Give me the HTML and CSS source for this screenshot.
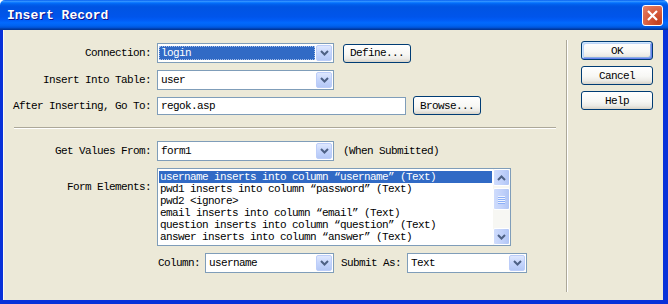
FILE: index.html
```html
<!DOCTYPE html>
<html lang="en">
<head>
    <meta charset="UTF-8">
    <title>Insert Record</title>
    <link rel="stylesheet" href="styles.css">
</head>
<body>
    <div class="window">
        <div class="titlebar">
            <span class="title">Insert Record</span>
            <span class="close">
                <svg width="13" height="13" viewBox="0 0 13 13"><path d="M2 2l9 9M11 2l-9 9" stroke="#fff" stroke-width="2.2" fill="none"/></svg>
            </span>
        </div>
        <div class="frame">
            <div class="main">
                <div class="row">
                    <span class="lbl">Connection:</span>
                    <div class="combo w-wide">
                        <span class="value selected">login</span>
                        <span class="arrow"><svg width="9" height="6" viewBox="0 0 9 6"><path d="M1 1l3.5 3.5L8 1" stroke="#4d6185" stroke-width="2" fill="none"/></svg></span>
                    </div>
                    <button class="btn define">Define...</button>
                </div>
                <div class="row row-table">
                    <span class="lbl">Insert Into Table:</span>
                    <div class="combo w-wide">
                        <span class="value">user</span>
                        <span class="arrow"><svg width="9" height="6" viewBox="0 0 9 6"><path d="M1 1l3.5 3.5L8 1" stroke="#4d6185" stroke-width="2" fill="none"/></svg></span>
                    </div>
                </div>
                <div class="row row-goto">
                    <span class="lbl">After Inserting, Go To:</span>
                    <div class="textbox">regok.asp</div>
                    <button class="btn browse">Browse...</button>
                </div>
                <div class="separator"></div>
                <div class="row row-values">
                    <span class="lbl">Get Values From:</span>
                    <div class="combo w-wide">
                        <span class="value">form1</span>
                        <span class="arrow"><svg width="9" height="6" viewBox="0 0 9 6"><path d="M1 1l3.5 3.5L8 1" stroke="#4d6185" stroke-width="2" fill="none"/></svg></span>
                    </div>
                    <span class="note">(When Submitted)</span>
                </div>
                <div class="row row-elements">
                    <span class="lbl lbl-top">Form Elements:</span>
                    <div class="listbox">
                        <ul class="items">
                            <li class="active">username inserts into column “username” (Text)</li>
                            <li>pwd1 inserts into column “password” (Text)</li>
                            <li>pwd2 &lt;ignore&gt;</li>
                            <li>email inserts into column “email” (Text)</li>
                            <li>question inserts into column “question” (Text)</li>
                            <li>answer inserts into column “answer” (Text)</li>
                        </ul>
                        <div class="scrollbar">
                            <span class="sb-btn"><svg width="9" height="6" viewBox="0 0 9 6"><path d="M1 5l3.5-3.5L8 5" stroke="#4d6185" stroke-width="2" fill="none"/></svg></span>
                            <span class="sb-thumb"><i></i><i></i><i></i><i></i></span>
                            <span class="sb-track"></span>
                            <span class="sb-btn"><svg width="9" height="6" viewBox="0 0 9 6"><path d="M1 1l3.5 3.5L8 1" stroke="#4d6185" stroke-width="2" fill="none"/></svg></span>
                        </div>
                    </div>
                </div>
                <div class="row row-column">
                    <span class="inline-lbl">Column:</span>
                    <div class="combo w-column">
                        <span class="value">username</span>
                        <span class="arrow"><svg width="9" height="6" viewBox="0 0 9 6"><path d="M1 1l3.5 3.5L8 1" stroke="#4d6185" stroke-width="2" fill="none"/></svg></span>
                    </div>
                    <span class="inline-lbl submit-lbl">Submit As:</span>
                    <div class="combo w-submit">
                        <span class="value">Text</span>
                        <span class="arrow"><svg width="9" height="6" viewBox="0 0 9 6"><path d="M1 1l3.5 3.5L8 1" stroke="#4d6185" stroke-width="2" fill="none"/></svg></span>
                    </div>
                </div>
            </div>
            <div class="side">
                <button class="btn side-btn default">OK</button>
                <button class="btn side-btn">Cancel</button>
                <button class="btn side-btn">Help</button>
            </div>
        </div>
    </div>
</body>
</html>
```

FILE: styles.css
```css
* {
    margin: 0;
    padding: 0;
    box-sizing: border-box;
}
body {
    font-family: "Liberation Mono", "Courier New", monospace;
    font-size: 11px;
    letter-spacing: -0.6px;
    color: #000;
    background: #fff;
}
.window {
    width: 668px;
    height: 304px;
    display: flex;
    flex-direction: column;
}
.titlebar {
    height: 30px;
    flex-shrink: 0;
    display: flex;
    align-items: center;
    justify-content: space-between;
    padding: 0 5px 0 7px;
    border-radius: 5px 5px 0 0;
    background: linear-gradient(to bottom, #0058ee 0%, #3593ff 4%, #288eff 6%, #127dff 8%, #036ffc 10%, #0262ee 14%, #0057e5 20%, #0054e3 24%, #0055eb 56%, #005bf5 66%, #026afe 76%, #0062ef 86%, #0052d6 92%, #0040ab 96%, #003092 100%);
}
.title {
    font-size: 13px;
    font-weight: bold;
    letter-spacing: 0;
    color: #fff;
    text-shadow: 1px 1px 0 #0f1089;
    padding-top: 1px;
}
.close {
    width: 21px;
    height: 21px;
    display: flex;
    align-items: center;
    justify-content: center;
    border: 1px solid #fff;
    border-radius: 3px;
    background: radial-gradient(circle at 80% 85%, #c2401f 0%, #d65a3a 45%, #e8846a 100%);
}
.frame {
    flex: 1;
    display: flex;
    background: #ece9d8;
    border-style: solid;
    border-color: #0831d9;
    border-width: 0 5px 4px 3px;
    box-shadow: inset 1px 0 0 #fbfaf5;
}
.main {
    width: 563px;
    flex-shrink: 0;
    padding-top: 13px;
}
.row {
    display: flex;
    align-items: center;
}
.row-table {
    margin-top: 7px;
}
.row-goto {
    margin-top: 6px;
}
.row-values {
    margin-top: 12px;
}
.row-elements {
    margin-top: 7px;
    align-items: flex-start;
}
.row-column {
    margin-top: 7px;
    padding-left: 155px;
}
.lbl {
    width: 148px;
    flex-shrink: 0;
    text-align: right;
    margin-right: 6px;
    white-space: nowrap;
}
.lbl-top {
    padding-top: 13px;
    line-height: 12px;
}
.inline-lbl {
    margin-right: 5px;
    white-space: nowrap;
}
.submit-lbl {
    margin-left: 7px;
    margin-right: 6px;
}
.combo {
    height: 20px;
    display: flex;
    padding: 1px;
    border: 1px solid #7f9db9;
    background: #fff;
}
.w-wide {
    width: 177px;
}
.w-column {
    width: 129px;
}
.w-submit {
    width: 120px;
}
.value {
    flex: 1;
    display: flex;
    align-items: center;
    padding-left: 2px;
    white-space: nowrap;
}
.value.selected {
    margin: 1px 1px 1px 0;
    background: #316ac5;
    color: #fff;
    outline: 1px dotted #a8bfe8;
    outline-offset: -1px;
}
.arrow {
    width: 16px;
    display: flex;
    align-items: center;
    justify-content: center;
    border: 1px solid #bccdf9;
    border-radius: 2px;
    background: linear-gradient(to bottom, #dfe8fe, #c5d5fc 50%, #b4c8f6);
}
.textbox {
    width: 249px;
    height: 18px;
    line-height: 16px;
    padding-left: 3px;
    border: 1px solid #7f9db9;
    background: #fff;
}
.btn {
    font: inherit;
    letter-spacing: inherit;
    color: #000;
    height: 19px;
    border: 1px solid #003c74;
    border-radius: 3px;
    background: linear-gradient(to bottom, #ffffff 0%, #f7f7f4 55%, #ecebe6 80%, #d8d3c8 100%);
}
.define {
    width: 68px;
    margin-left: 9px;
}
.browse {
    width: 68px;
    margin-left: 7px;
}
.separator {
    height: 2px;
    margin: 12px 10px 0 11px;
    border-top: 1px solid #aca899;
    border-bottom: 1px solid #fff;
}
.note {
    margin-left: 9px;
}
.listbox {
    width: 354px;
    height: 78px;
    display: flex;
    border: 1px solid #7f9db9;
    background: #fff;
}
.items {
    flex: 1;
    list-style: none;
    padding: 2px 1px 0 1px;
    overflow: hidden;
}
.items li {
    height: 12px;
    line-height: 12px;
    padding-left: 1px;
    white-space: nowrap;
    overflow: hidden;
}
.items li.active {
    background: #316ac5;
    color: #fff;
}
.scrollbar {
    width: 17px;
    display: flex;
    flex-direction: column;
    background: #f7f7f3;
}
.sb-btn {
    height: 17px;
    display: flex;
    align-items: center;
    justify-content: center;
    border: 1px solid #fff;
    border-radius: 2px;
    background: linear-gradient(to right, #cfdcfc, #bfd0fa 60%, #b0c5f5);
}
.sb-thumb {
    height: 22px;
    margin-top: 2px;
    display: flex;
    flex-direction: column;
    align-items: center;
    justify-content: center;
    gap: 1px;
    border: 1px solid #fff;
    border-radius: 2px;
    background: linear-gradient(to right, #cfdcfc, #bfd0fa 60%, #b0c5f5);
}
.sb-thumb i {
    width: 7px;
    height: 1px;
    background: #eef3fe;
    box-shadow: 0 1px 0 #8cb0f8;
}
.sb-track {
    flex: 1;
}
.side {
    flex: 1;
    margin: 10px 0 8px;
    padding: 1px 0 0 14px;
    border-left: 1px solid #aca899;
    box-shadow: inset 1px 0 0 #fff;
    display: flex;
    flex-direction: column;
    gap: 6px;
}
.side-btn {
    width: 72px;
}
.default {
    box-shadow: inset 1px 1px 0 #cee7ff, inset -1px -1px 0 #6982ee, inset 2px 2px 0 #bcd4f6, inset -2px -2px 0 #89ade4;
}
```
